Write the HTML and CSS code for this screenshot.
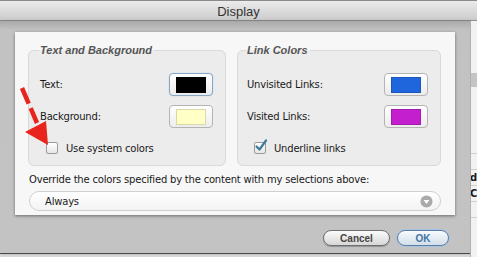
FILE: index.html
```html
<!DOCTYPE html>
<html>
<head>
<meta name="viewport" content="width=device-width, initial-scale=1.0">
  <title>Display</title>
  <link rel="stylesheet" href="styles.css">
</head>
<body>
  <div class="window">
    <div class="titlebar">Display</div>
    <div class="main">
      <div class="sheet">
        <div class="panel">
          <div class="groups">
            <fieldset class="group group-text">
              <legend>Text and Background</legend>
              <div class="row">
                <span>Text:</span>
                <button class="well focused"><span class="swatch" style="background:#000000"></span></button>
              </div>
              <div class="row">
                <span>Background:</span>
                <button class="well"><span class="swatch" style="background:#ffffc6"></span></button>
              </div>
              <label class="check">
                <span class="box"></span>
                <span>Use system colors</span>
              </label>
            </fieldset>
            <fieldset class="group group-links">
              <legend>Link Colors</legend>
              <div class="row">
                <span>Unvisited Links:</span>
                <button class="well"><span class="swatch" style="background:#1f66dd"></span></button>
              </div>
              <div class="row">
                <span>Visited Links:</span>
                <button class="well"><span class="swatch" style="background:#c41fce"></span></button>
              </div>
              <label class="check">
                <span class="box">
                  <svg width="14" height="14" viewBox="0 0 14 14">
                    <path d="M2.5 7.5 L5.5 10.5 L12 1.5" fill="none" stroke="#3d7c9c" stroke-width="2.2" stroke-linecap="round" stroke-linejoin="round"/>
                  </svg>
                </span>
                <span>Underline links</span>
              </label>
            </fieldset>
          </div>
          <p class="override">Override the colors specified by the content with my selections above:</p>
          <div class="popup">
            <span>Always</span>
            <span class="popup-arrow">
              <svg width="13" height="13" viewBox="0 0 13 13">
                <circle cx="6.5" cy="6.5" r="6" fill="#a9a9a9"/>
                <path d="M3.6 5 L9.4 5 L6.5 9 Z" fill="#fff"/>
              </svg>
            </span>
          </div>
        </div>
        <div class="buttons">
          <button class="btn">Cancel</button>
          <button class="btn btn-default">OK</button>
        </div>
      </div>
      <!-- the window behind the sheet, cut off at the right edge -->
      <div class="behind">
        <div class="behind-head"></div>
        <div class="behind-row tall"></div>
        <div class="behind-row"></div>
        <div class="behind-row text">dv</div>
        <div class="behind-row text">Co</div>
        <div class="behind-row"></div>
      </div>
    </div>
    <!-- red annotation arrow drawn over the dialog -->
    <svg class="annotation" width="477" height="257" viewBox="0 0 477 257">
      <path d="M22 88 L37 123" stroke="#e8241c" stroke-width="4.5" stroke-dasharray="17 5" fill="none"/>
      <path d="M25 132 L46 121 L48 145 Z" fill="#e8241c"/>
    </svg>
  </div>
</body>
</html>
```

FILE: styles.css
```css
body {
  margin: 0;
  font-family: "DejaVu Sans", sans-serif;
  font-size: 10px;
  letter-spacing: -0.2px;
  color: #1a1a1a;
}

.window {
  position: relative;
  width: 477px;
  height: 257px;
  overflow: hidden;
  background: #d8d8d8;
}

.titlebar {
  height: 21px;
  line-height: 21px;
  text-align: center;
  font-family: "Liberation Sans", sans-serif;
  font-size: 13px;
  letter-spacing: 0;
  color: #333;
  background: linear-gradient(#ececec, #cbcbcb);
  border-top: 1px solid #8a8a8a;
  border-bottom: 1px solid #8f8f8f;
  box-sizing: border-box;
}

.main {
  display: flex;
  height: 236px;
}

.sheet {
  width: 470px;
  height: 233px;
  background: linear-gradient(#a9a9a9, #c2c2c2 9px, #c3c3c3);
  border-bottom: 1px solid #4a4a4a;
  box-shadow: 1px 0 2px rgba(0, 0, 0, 0.25);
  padding-top: 11px;
  box-sizing: border-box;
}

.panel {
  margin: 0 15px;
  height: 183px;
  background: #f7f7f7;
  box-shadow: 0 1px 3px rgba(0, 0, 0, 0.45);
  padding: 12px 14px 0 13px;
  box-sizing: border-box;
}

.groups {
  display: flex;
  gap: 11px;
}

.group {
  margin: 0;
  padding: 17px 12px 0 11px;
  height: 122px;
  box-sizing: border-box;
  border: 1px solid #d9d9d9;
  border-radius: 6px;
  background: #ececec;
}

.group-text {
  width: 198px;
}

.group-links {
  width: 204px;
  padding-left: 9px;
}

.group legend {
  padding: 0 2px 0 1px;
  margin-left: -1px;
  font-family: "Liberation Sans", sans-serif;
  font-weight: bold;
  font-style: italic;
  font-size: 11px;
  letter-spacing: 0;
  color: #555;
}

.row {
  display: flex;
  justify-content: space-between;
  align-items: center;
  height: 23px;
  margin-bottom: 9px;
}

.well {
  width: 44px;
  height: 23px;
  padding: 0;
  display: flex;
  align-items: center;
  justify-content: center;
  border: 1px solid #b4b4b4;
  border-radius: 4px;
  background: linear-gradient(#ffffff, #ececec);
}

.well.focused {
  border-color: #86a7c8;
  box-shadow: 0 0 1px #9dbbd8;
}

.swatch {
  display: block;
  width: 28px;
  height: 14px;
  border: 1px solid rgba(0, 0, 0, 0.15);
}

/* margin collapses with the row above, so this is the whole gap */
.check {
  display: flex;
  align-items: center;
  gap: 8px;
  margin-left: 6px;
  margin-top: 14px;
}

.group-links .check {
  margin-left: 7px;
}

.check .box {
  position: relative;
  width: 10px;
  height: 10px;
  border: 1px solid #9a9a9a;
  border-radius: 2px;
  background: linear-gradient(#ffffff, #e6e6e6);
}

.check .box svg {
  position: absolute;
  left: -1px;
  top: -4px;
}

.override {
  margin: 7px 0 0 1px;
  height: 13px;
  line-height: 13px;
}

.popup {
  display: flex;
  align-items: center;
  justify-content: space-between;
  margin-top: 5px;
  margin-left: 1px;
  height: 20px;
  padding: 0 7px 0 15px;
  border: 1px solid #cfcfcf;
  border-radius: 11px;
  background: linear-gradient(#ffffff, #f3f3f3);
  box-sizing: border-box;
}

.popup-arrow svg {
  display: block;
}

.buttons {
  display: flex;
  justify-content: flex-end;
  gap: 7px;
  margin: 15px 21px 0 0;
}

.btn {
  height: 16px;
  width: 67px;
  padding: 0;
  font-family: "Liberation Sans", sans-serif;
  font-weight: bold;
  font-size: 10px;
  letter-spacing: 0;
  color: #444;
  border: 1px solid #6f6f6f;
  border-radius: 9px;
  background: linear-gradient(#fbfbfb, #d7d7d7);
  box-shadow: 0 1px 1px rgba(0, 0, 0, 0.25);
}

.btn-default {
  width: 52px;
  color: #3f74a8;
  border-color: #5e7fa3;
  background: linear-gradient(#f8fbfe, #d2deea);
  box-shadow: 0 0 0 1px #a6c3e0;
}

.behind {
  flex: 1;
  background: #f2f2f2;
  border-left: 1px solid #b0b0b0;
  overflow: hidden;
  font-size: 10px;
  font-weight: bold;
  white-space: nowrap;
}

.behind-head {
  height: 14px;
  margin-top: 52px;
  background: #c4c4c4;
}

.behind-row {
  height: 15px;
  line-height: 15px;
  border-bottom: 1px solid #cfcfcf;
}

.behind-row.tall {
  height: 66px;
}

.behind-row.text {
  text-indent: -1px;
}

.annotation {
  position: absolute;
  left: 0;
  top: 0;
  pointer-events: none;
}
```
